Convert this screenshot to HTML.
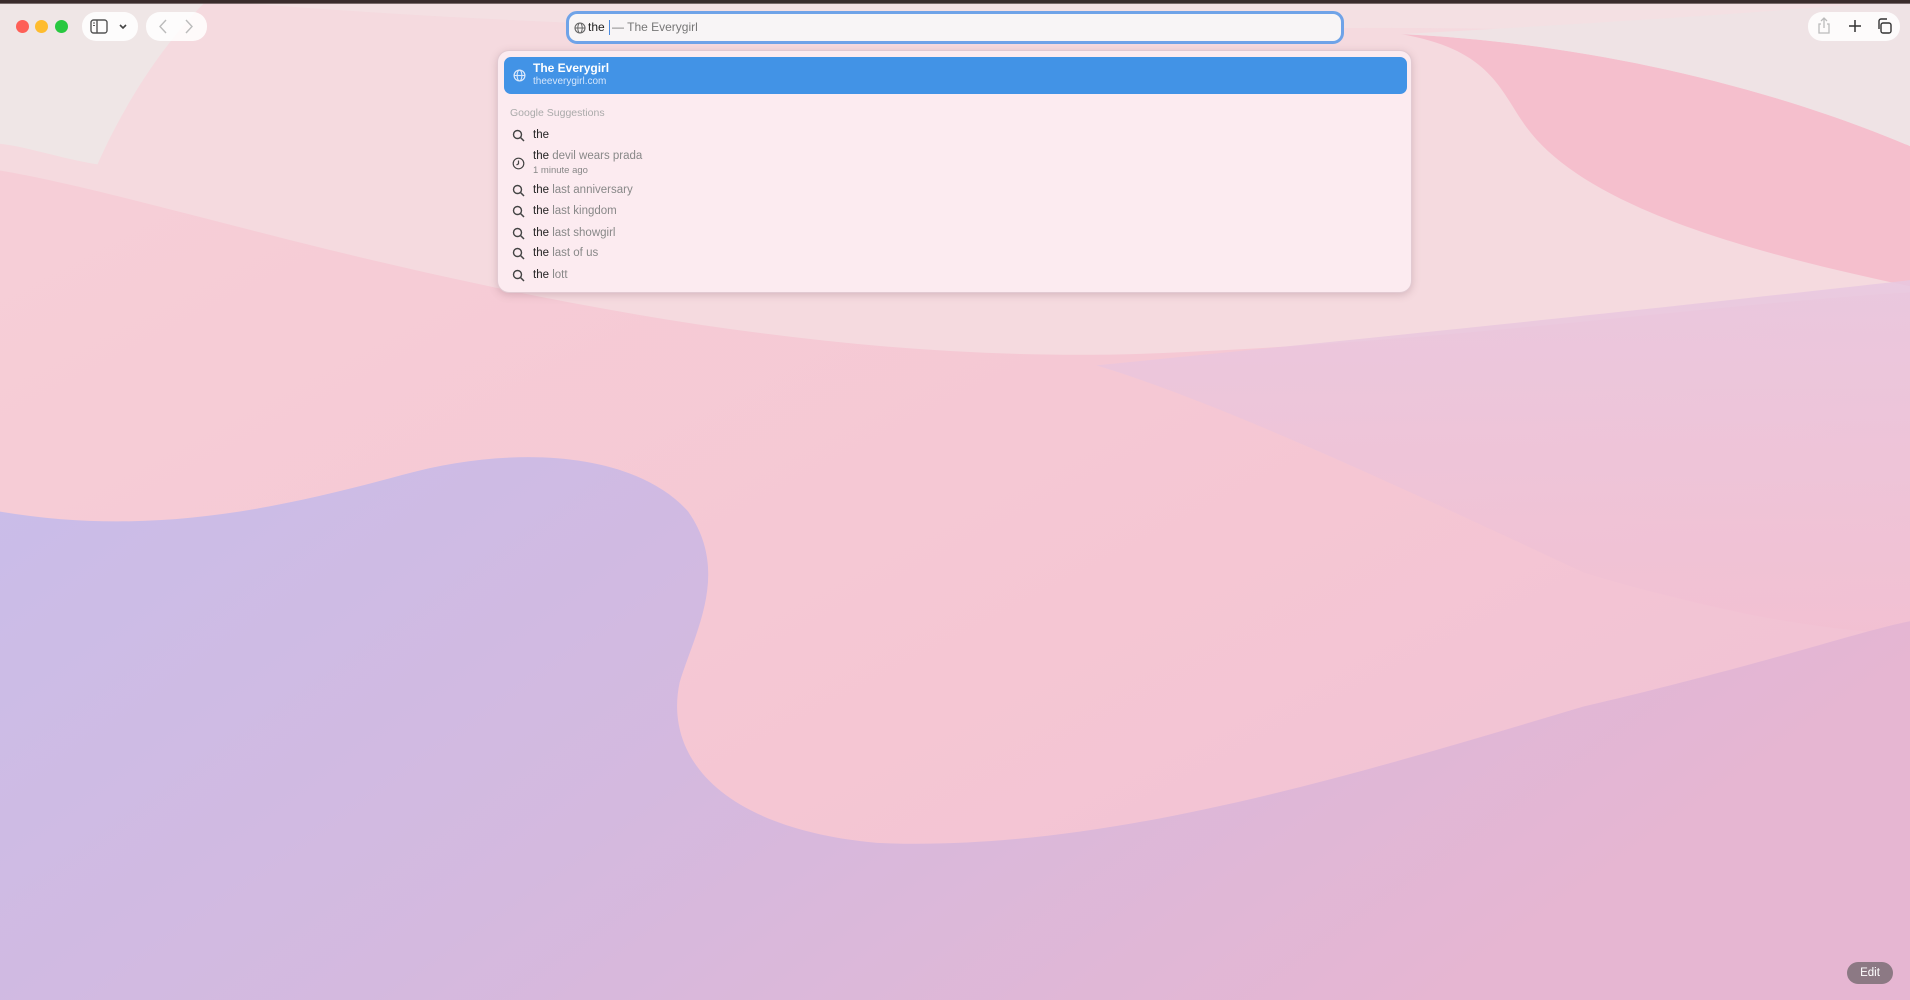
<!DOCTYPE html>
<html><head><meta charset="utf-8"><style>
*{margin:0;padding:0;box-sizing:border-box}
body{width:1910px;height:1000px;overflow:hidden;position:relative;font-family:"Liberation Sans",sans-serif;background:#f3cad6}
svg.bg{position:absolute;left:0;top:0}
.abs{position:absolute}
.dot{position:absolute;top:20px;width:13px;height:13px;border-radius:50%}
.btn{position:absolute;background:rgba(255,255,255,0.85);border-radius:14px;height:29px;top:12px}
.url{position:absolute;left:566px;top:11px;width:778px;height:33px;border:3px solid #6fa3e8;border-radius:11px;background:#f8f5f6;font-size:12px;line-height:27px;color:#222}
.dd{position:absolute;left:497px;top:50px;width:915px;height:243px;background:#fcebf0;border-radius:12px;box-shadow:0 2px 8px rgba(120,80,90,0.25);border:1px solid rgba(200,170,180,0.5)}
.sel{position:absolute;left:6px;top:6px;width:903px;height:37px;background:#4293e6;border-radius:7px;color:#fff}
.row{position:absolute;left:35px;font-size:11.5px;color:#888}
.row b{font-weight:normal;color:#222}
.ic{position:absolute;left:14px}
</style></head><body>
<svg class="bg" width="1910" height="1000" viewBox="0 0 1568 821" preserveAspectRatio="none">
<defs>
<linearGradient id="pk" x1="0" y1="0" x2="1" y2="1"><stop offset="0" stop-color="#f6d0d8"/><stop offset="0.6" stop-color="#f5c6d3"/><stop offset="1" stop-color="#eec0d6"/></linearGradient>
<linearGradient id="lv" x1="0" y1="0" x2="1" y2="0.4"><stop offset="0" stop-color="#c9bde9"/><stop offset="0.5" stop-color="#d4b9df"/><stop offset="1" stop-color="#e6b6d2"/></linearGradient>
<linearGradient id="rp" x1="0" y1="0" x2="0" y2="1"><stop offset="0" stop-color="#e8c8e0"/><stop offset="1" stop-color="#f2c0d2"/></linearGradient>
</defs>
<rect width="1568" height="821" fill="url(#pk)"/>
<path d="M0 0H1568V240C1400 250 1200 280 950 290C700 300 450 250 250 200C150 175 60 150 0 140Z" fill="#f5dadf"/>
<path d="M0 0H170C130 40 100 90 80 135C50 130 20 120 0 118Z" fill="#efe6e6"/>
<path d="M170 0H1568V30C1300 25 1150 20 1000 25C700 30 400 20 170 0Z" fill="#f3e4e6" opacity="0.6"/>
<path d="M1150 28C1300 35 1450 70 1568 120V235C1400 200 1290 160 1250 100C1230 70 1220 40 1150 28Z" fill="#f5bfcd"/>
<path d="M1568 0V120C1450 70 1300 35 1150 28C1300 20 1450 10 1568 0Z" fill="#efe3e5"/>
<path d="M1568 230C1300 260 1100 280 900 300C1000 330 1150 400 1300 470C1400 500 1500 520 1568 520Z" fill="url(#rp)" opacity="0.85"/>
<path d="M0 420C120 440 220 420 330 390C420 365 520 370 565 420C600 470 570 520 558 560C545 620 590 680 720 692C900 700 1100 640 1300 580C1450 545 1520 520 1568 510V821H0Z" fill="url(#lv)"/>
<rect x="0" y="0" width="1568" height="3" fill="#3a2c2c"/>
</svg>

<div class="dot" style="left:16px;background:#fe5f57"></div>
<div class="dot" style="left:35px;background:#febc2e"></div>
<div class="dot" style="left:55px;background:#28c840"></div>

<div class="btn" style="left:82px;width:56px">
<svg class="abs" style="left:8px;top:7px" width="18" height="15" viewBox="0 0 18 15"><rect x="1" y="1" width="16" height="13" rx="2.5" fill="none" stroke="#555" stroke-width="1.4"/><line x1="7" y1="1" x2="7" y2="14" stroke="#555" stroke-width="1.4"/><line x1="3" y1="4" x2="5" y2="4" stroke="#555"/><line x1="3" y1="6.5" x2="5" y2="6.5" stroke="#555"/></svg>
<svg class="abs" style="left:36px;top:11px" width="10" height="8" viewBox="0 0 10 8"><path d="M2 2L5 5L8 2" fill="none" stroke="#444" stroke-width="1.6"/></svg>
</div>
<div class="btn" style="left:146px;width:61px">
<svg class="abs" style="left:12px;top:7px" width="10" height="15" viewBox="0 0 10 15"><path d="M8 1L2 7.5L8 14" fill="none" stroke="#bbb" stroke-width="1.4"/></svg>
<svg class="abs" style="left:38px;top:7px" width="10" height="15" viewBox="0 0 10 15"><path d="M2 1L8 7.5L2 14" fill="none" stroke="#bbb" stroke-width="1.4"/></svg>
</div>

<div class="url">
<svg class="abs" style="left:5px;top:8px" width="12" height="12" viewBox="0 0 12 12"><circle cx="6" cy="6" r="5" fill="none" stroke="#666" stroke-width="1.1"/><ellipse cx="6" cy="6" rx="2.2" ry="5" fill="none" stroke="#666"/><line x1="1" y1="6" x2="11" y2="6" stroke="#666"/></svg>
<span class="abs" style="left:19px">the</span><span class="abs" style="left:40px;top:6px;width:1px;height:15px;background:#4a8ae0"></span><span class="abs" style="left:43px;color:#777">— The Everygirl</span>
</div>

<div class="btn" style="left:1808px;width:92px">
<svg class="abs" style="left:9px;top:5px" width="14" height="18" viewBox="0 0 14 18"><path d="M4 7H2V16H12V7H10M7 11V1M4 4L7 1L10 4" fill="none" stroke="#bbb" stroke-width="1.3"/></svg>
<svg class="abs" style="left:40px;top:7px" width="14" height="14" viewBox="0 0 14 14"><path d="M7 1V13M1 7H13" stroke="#333" stroke-width="1.5"/></svg>
<svg class="abs" style="left:68px;top:6px" width="16" height="16" viewBox="0 0 16 16"><rect x="5" y="5" width="10" height="10" rx="2" fill="none" stroke="#333" stroke-width="1.4"/><path d="M3 11V3A2 2 0 0 1 5 1H11" fill="none" stroke="#333" stroke-width="1.4"/></svg>
</div>

<div class="dd">
<div class="sel">
<svg class="abs" style="left:9px;top:12px" width="13" height="13" viewBox="0 0 12 12"><circle cx="6" cy="6" r="5" fill="none" stroke="#dce9fb" stroke-width="1.1"/><ellipse cx="6" cy="6" rx="2.2" ry="5" fill="none" stroke="#dce9fb"/><line x1="1" y1="6" x2="11" y2="6" stroke="#dce9fb"/></svg>
<div class="abs" style="left:29px;top:4px;font-size:12px;font-weight:bold">The Everygirl</div>
<div class="abs" style="left:29px;top:19px;font-size:10px;color:#d5e6fb">theeverygirl.com</div>
</div>
<div class="abs" style="left:12px;top:56px;font-size:10.5px;color:#aaa">Google Suggestions</div>
<div class="row" style="top:78px"><b>the</b></div>
<div class="row" style="top:99px"><b>the</b> devil wears prada</div>
<div class="row" style="top:114px;font-size:9.5px">1 minute ago</div>
<div class="row" style="top:133px"><b>the</b> last anniversary</div>
<div class="row" style="top:154px"><b>the</b> last kingdom</div>
<div class="row" style="top:176px"><b>the</b> last showgirl</div>
<div class="row" style="top:196px"><b>the</b> last of us</div>
<div class="row" style="top:218px"><b>the</b> lott</div>
<svg class="ic" style="top:78px" width="13" height="13" viewBox="0 0 13 13"><circle cx="5.5" cy="5.5" r="4" fill="none" stroke="#444" stroke-width="1.4"/><path d="M8.5 8.5L12 12" stroke="#444" stroke-width="1.5"/></svg>
<svg class="ic" style="top:106px" width="13" height="13" viewBox="0 0 13 13"><circle cx="6.5" cy="6.5" r="5.3" fill="none" stroke="#444" stroke-width="1.2"/><path d="M6.5 3.5V6.8L4.5 8" fill="none" stroke="#444" stroke-width="1.2"/></svg>
<svg class="ic" style="top:133px" width="13" height="13" viewBox="0 0 13 13"><circle cx="5.5" cy="5.5" r="4" fill="none" stroke="#444" stroke-width="1.4"/><path d="M8.5 8.5L12 12" stroke="#444" stroke-width="1.5"/></svg>
<svg class="ic" style="top:154px" width="13" height="13" viewBox="0 0 13 13"><circle cx="5.5" cy="5.5" r="4" fill="none" stroke="#444" stroke-width="1.4"/><path d="M8.5 8.5L12 12" stroke="#444" stroke-width="1.5"/></svg>
<svg class="ic" style="top:176px" width="13" height="13" viewBox="0 0 13 13"><circle cx="5.5" cy="5.5" r="4" fill="none" stroke="#444" stroke-width="1.4"/><path d="M8.5 8.5L12 12" stroke="#444" stroke-width="1.5"/></svg>
<svg class="ic" style="top:196px" width="13" height="13" viewBox="0 0 13 13"><circle cx="5.5" cy="5.5" r="4" fill="none" stroke="#444" stroke-width="1.4"/><path d="M8.5 8.5L12 12" stroke="#444" stroke-width="1.5"/></svg>
<svg class="ic" style="top:218px" width="13" height="13" viewBox="0 0 13 13"><circle cx="5.5" cy="5.5" r="4" fill="none" stroke="#444" stroke-width="1.4"/><path d="M8.5 8.5L12 12" stroke="#444" stroke-width="1.5"/></svg>
</div>

<div class="abs" style="left:1847px;top:962px;width:46px;height:22px;border-radius:11px;background:rgba(110,100,105,0.75);color:#fff;font-size:11.5px;line-height:22px;text-align:center">Edit</div>
</body></html>
